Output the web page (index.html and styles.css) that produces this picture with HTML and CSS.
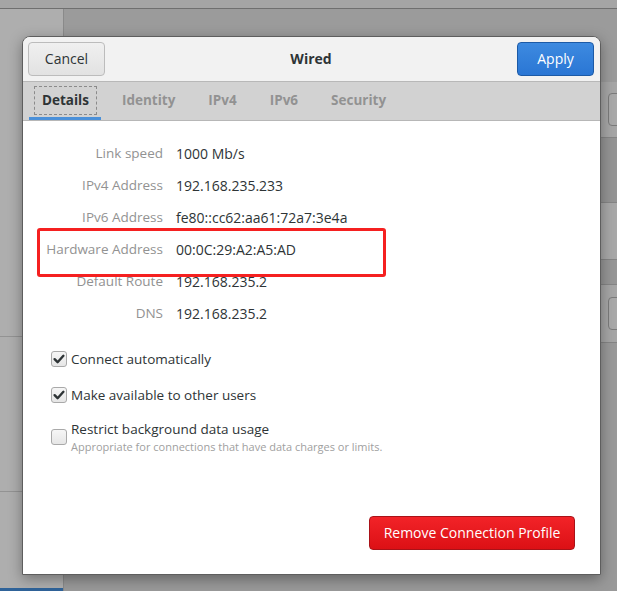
FILE: index.html
```html
<!DOCTYPE html>
<html>
<head>
<meta charset="utf-8">
<link rel="stylesheet" href="styles.css">
</head>
<body>
<div class="app">
  <div class="app-top"></div>
  <div class="app-body">
    <div class="sidebar">
      <div class="side-row side-a"></div>
      <div class="side-row side-b"></div>
      <div class="side-row side-c"><div class="side-sel"></div></div>
    </div>
    <div class="main">
      <div class="mrow m0"></div>
      <div class="mrow m1"><span class="mbtn"></span></div>
      <div class="mrow m2"></div>
      <div class="mrow m3"></div>
      <div class="mrow m4"></div>
      <div class="mrow m5"><span class="mbtn"></span></div>
      <div class="mrow m6"></div>
    </div>
  </div>
</div>

<div class="dialog">
  <div class="header">
    <button class="btn btn-cancel">Cancel</button>
    <div class="title">Wired</div>
    <button class="btn btn-apply">Apply</button>
  </div>
  <div class="tabs">
    <div class="tab active"><span class="focus">Details</span></div>
    <div class="tab">Identity</div>
    <div class="tab">IPv4</div>
    <div class="tab">IPv6</div>
    <div class="tab">Security</div>
  </div>
  <div class="content">
    <div class="details">
      <div class="lbl">Link speed</div><div class="val">1000 Mb/s</div>
      <div class="lbl">IPv4 Address</div><div class="val">192.168.235.233</div>
      <div class="lbl">IPv6 Address</div><div class="val">fe80::cc62:aa61:72a7:3e4a</div>
      <div class="lbl">Hardware Address</div><div class="val">00:0C:29:A2:A5:AD</div>
      <div class="lbl">Default Route</div><div class="val">192.168.235.2</div>
      <div class="lbl">DNS</div><div class="val">192.168.235.2</div>
    </div>
    <div class="checks">
      <div class="check">
        <span class="box checked"><svg viewBox="0 0 16 16" width="16" height="16"><path d="M3.6 8.2 L6.6 11.2 L12.4 4.8" fill="none" stroke="#2e3436" stroke-width="2.4" stroke-linecap="round" stroke-linejoin="round"/></svg></span>
        <span class="ctext">Connect automatically</span>
      </div>
      <div class="check">
        <span class="box checked"><svg viewBox="0 0 16 16" width="16" height="16"><path d="M3.6 8.2 L6.6 11.2 L12.4 4.8" fill="none" stroke="#2e3436" stroke-width="2.4" stroke-linecap="round" stroke-linejoin="round"/></svg></span>
        <span class="ctext">Make available to other users</span>
      </div>
      <div class="check check-multi">
        <span class="box"></span>
        <span class="ctext-wrap">
          <span class="ctext">Restrict background data usage</span>
          <span class="csub">Appropriate for connections that have data charges or limits.</span>
        </span>
      </div>
    </div>
    <div class="footer">
      <button class="btn btn-remove">Remove Connection Profile</button>
    </div>
  </div>
  <div class="highlight"></div>
</div>
</body>
</html>
```

FILE: styles.css
```css
* { box-sizing: border-box; }
html, body {
  margin: 0;
  padding: 0;
}
body {
  width: 617px;
  height: 591px;
  overflow: hidden;
  position: relative;
  background: #9e9e9e;
  font-family: "Open Sans", "DejaVu Sans", sans-serif;
  font-size: 13.5px;
  color: #2e3436;
}

/* background application (dimmed) */
.app {
  width: 617px;
  height: 591px;
  display: flex;
  flex-direction: column;
}
.app-top {
  height: 9px;
  background: #a5a5a5;
  border-bottom: 1px solid #6f6f6f;
  flex: none;
}
.app-body {
  flex: 1;
  display: flex;
}
.sidebar {
  width: 64px;
  flex: none;
  border-right: 1px solid #8a8a8a;
  background: #aeaeae;
  display: flex;
  flex-direction: column;
}
.side-row { border-bottom: 1px solid #939393; }
.side-a { height: 328px; }
.side-b { height: 155px; }
.side-c {
  flex: 1;
  border-bottom: none;
  display: flex;
  flex-direction: column;
  justify-content: flex-end;
}
.side-sel { height: 3px; background: #2f6399; }
.main {
  flex: 1;
  display: flex;
  flex-direction: column;
  background: #9b9b9b;
}
.mrow {
  border-bottom: 1px solid #858585;
  display: flex;
  align-items: center;
  justify-content: flex-end;
}
.m0 { height: 73px; background: #9b9b9b; border-bottom: none; }
.m1 { height: 56px; background: #a6a6a6; }
.m2 { height: 65px; background: #949494; }
.m3 { height: 57px; background: #a8a8a8; }
.m4 { height: 25px; background: #969696; }
.m5 { height: 58px; background: #a6a6a6; }
.m6 { flex: 1; background: #999999; border-bottom: none; }
.mbtn {
  width: 20px;
  height: 33px;
  margin-right: -11px;
  border: 1px solid #7b7b7b;
  border-radius: 4px;
  background: #a9a9a9;
}

/* dialog */
.dialog {
  position: absolute;
  left: 22px;
  top: 36px;
  width: 579px;
  height: 539px;
  border: 1px solid #5e5e5e;
  border-radius: 8px 8px 0 0;
  background: #ffffff;
  box-shadow: 0 4px 14px rgba(0, 0, 0, 0.35);
  display: flex;
  flex-direction: column;
}
.header {
  height: 45px;
  flex: none;
  background: #f2f2f2;
  border-bottom: 1px solid #b8b8b8;
  border-radius: 7px 7px 0 0;
  display: flex;
  align-items: center;
  padding: 0 6px 0 5px;
}
.title {
  flex: 1;
  text-align: center;
  font-weight: bold;
  font-size: 14px;
  color: #2e3436;
  padding-bottom: 2px;
}
.btn {
  font-family: inherit;
  font-size: 14px;
  height: 34px;
  border-radius: 4px;
  padding: 0 8px 1px;
  cursor: default;
}
.btn-cancel {
  width: 77px;
  color: #2e3436;
  border: 1px solid #bcbcbc;
  background: linear-gradient(#f0f0f0, #e2e2e2);
}
.btn-apply {
  width: 77px;
  color: #ffffff;
  border: 1px solid #1c5aa6;
  background: linear-gradient(#3d8ae0, #2a76d4);
}

.tabs {
  height: 39px;
  flex: none;
  background: #d2d2d2;
  border-bottom: 1px solid #b7b7b7;
  display: flex;
  gap: 9px;
  padding-left: 6px;
}
.tab {
  padding: 0 12px;
  display: flex;
  align-items: center;
  color: #929292;
  font-weight: bold;
  font-size: 13.5px;
  border-bottom: 3px solid transparent;
  padding-top: 1px;
}
.tab.active {
  color: #2e3436;
  border-bottom-color: #4a90d9;
  padding: 0 4px 0 5px;
  padding-top: 1px;
}
.focus {
  border: 1px dashed #8b8b8b;
  padding: 4px 7px;
  line-height: 19px;
}

.content {
  flex: 1;
  display: flex;
  flex-direction: column;
  background: #ffffff;
}
.details {
  display: grid;
  grid-template-columns: 140px 1fr;
  column-gap: 13px;
  grid-auto-rows: 32px;
  align-items: center;
  padding-top: 16px;
}
.lbl {
  text-align: right;
  color: #929292;
}
.val {
  color: #2e3436;
  font-size: 14px;
}

.checks {
  padding: 18px 0 0 28px;
  display: flex;
  flex-direction: column;
  gap: 12px;
}
.check {
  display: flex;
  align-items: center;
  gap: 4px;
  height: 24px;
}
.check-multi {
  align-items: flex-start;
  height: 36px;
  margin-top: 1px;
}
.check-multi .box {
  margin-top: 9px;
}
.ctext-wrap {
  display: flex;
  flex-direction: column;
  line-height: 18px;
}
.csub {
  font-size: 11px;
  color: #a0a0a0;
  line-height: 18px;
}
.box {
  width: 16px;
  height: 16px;
  flex: none;
  border: 1px solid #a9a9a9;
  border-radius: 3px;
  background: linear-gradient(#f6f6f6, #e6e6e6);
  display: flex;
  align-items: center;
  justify-content: center;
  position: relative;
}
.box svg { position: absolute; left: -1px; top: -1px; }

.footer {
  flex: 1;
  display: flex;
  justify-content: flex-end;
  align-items: flex-end;
  padding: 0 25px 24px 0;
}
.btn-remove {
  width: 206px;
  color: #ffffff;
  border: 1px solid #a91218;
  background: linear-gradient(#f22328, #dc1015);
}

.highlight {
  position: absolute;
  left: 14px;
  top: 191px;
  width: 349px;
  height: 49px;
  border: 3px solid #f52020;
  border-radius: 3px;
  pointer-events: none;
}
```
